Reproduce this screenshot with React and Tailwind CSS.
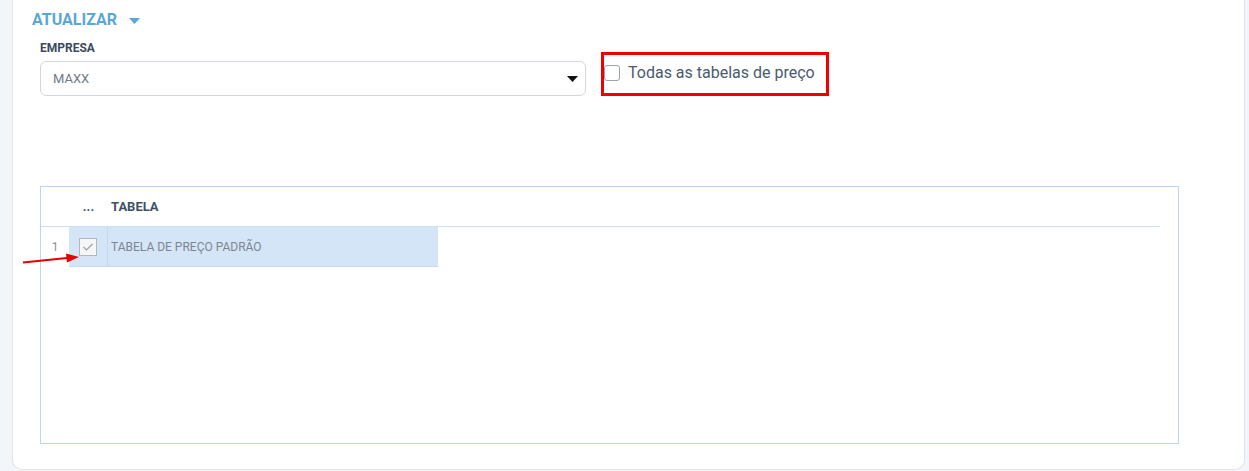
export default function App() {
  return (
    <div
      className="h-[471px] w-full overflow-hidden bg-[#f2f5f9] pl-[12px]"
      style={{ fontFamily: 'Roboto, "Noto Sans", sans-serif' }}
    >
      <div className="relative h-[470px] w-[1233px] rounded-b-[10px] border-x border-b border-[#e1e5ea] bg-white pt-[10px]">
        {/* Title */}
        <div className="ml-[19px] flex h-[20px] items-center gap-[12px]">
          <span className="text-[16px] font-bold leading-[20px] text-[#5aa6d6]">ATUALIZAR</span>
          <svg width="11" height="6" viewBox="0 0 11 6" className="mt-[1px]">
            <path d="M0 0 L11 0 L5.5 6 Z" fill="#5aa6d6" />
          </svg>
        </div>

        {/* Form row */}
        <div className="ml-[27px] mt-[10px] flex items-start">
          <div className="w-[546px]">
            <div className="text-[12px] font-bold leading-[16px] text-[#3b4a5e]">EMPRESA</div>
            <div className="mt-[5px] flex h-[35px] items-center justify-between rounded-[6px] border border-[#d3d8de] pl-[12px] pr-[7px]">
              <span className="text-[13px] text-[#6f7986]">MAXX</span>
              <svg width="11" height="6" viewBox="0 0 11 6">
                <path d="M0 0 L11 0 L5.5 6 Z" fill="#111" />
              </svg>
            </div>
          </div>
          <div className="ml-[15px] mt-[12px] flex h-[44px] w-[228px] items-start border-[3px] border-[#f00000]">
            <div className="mt-[9px] flex items-center gap-[8px]">
              <span className="h-[16px] w-[16px] rounded-[3px] border border-[#9aa3ad] bg-white" />
              <span className="text-[16px] leading-[18px] text-[#4a5b72]">Todas as tabelas de preço</span>
            </div>
          </div>
        </div>

        {/* Table */}
        <div className="ml-[27px] mt-[90px] h-[258px] w-[1139px] border border-[#bcd6f1]">
          <div className="mr-[18px] flex h-[40px] items-center border-b border-[#cfe0f2]">
            <div className="w-[28px]" />
            <div className="w-[39px] text-center text-[13px] font-bold text-[#3e5069]">...</div>
            <div className="pl-[3px] text-[13px] font-bold text-[#3e5069]">TABELA</div>
          </div>
          <div className="flex h-[40px]">
            <div className="flex w-[28px] items-center justify-center text-[12px] text-[#8a8f96]">1</div>
            <div className="flex w-[39px] items-center justify-center border-b border-r border-[#c6d8ee] bg-[#d5e5f8]">
              <span className="flex h-[18px] w-[18px] items-center justify-center border border-[#b4b8bd] bg-[#f4f6f8]">
                <svg width="12" height="10" viewBox="0 0 12 10">
                  <path d="M1.5 5 L4.5 8 L10.5 2" fill="none" stroke="#9aa0a6" strokeWidth="1.2" />
                </svg>
              </span>
            </div>
            <div className="flex w-[330px] items-center border-b border-[#c6d8ee] bg-[#d5e5f8] pl-[3px] text-[12px] text-[#7c8591]">
              TABELA DE PREÇO PADRÃO
            </div>
          </div>
        </div>

        {/* Red annotation arrow */}
        <svg className="absolute left-[8px] top-[250px]" width="60" height="16" viewBox="0 0 60 16">
          <path d="M2 12.5 L46 8" stroke="#e80000" strokeWidth="2.2" fill="none" />
          <path d="M45 3.5 L58 7 L46 12.5 Z" fill="#e80000" />
        </svg>
      </div>
    </div>
  )
}
